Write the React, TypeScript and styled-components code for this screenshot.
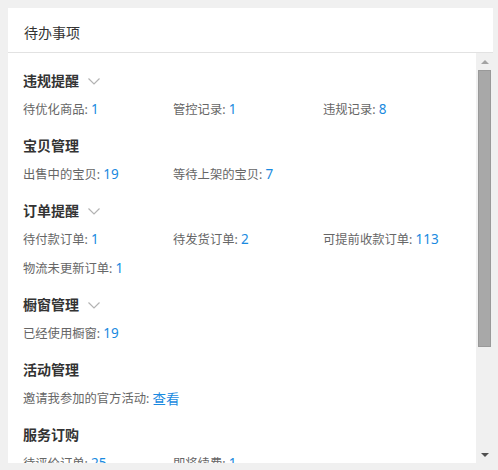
import React from 'react';
import styled, { createGlobalStyle } from 'styled-components';

type Item = { label: string; value: string };
type Section = { title: string; collapsible?: boolean; items: Item[] };

const sections: Section[] = [
  {
    title: '违规提醒',
    collapsible: true,
    items: [
      { label: '待优化商品', value: '1' },
      { label: '管控记录', value: '1' },
      { label: '违规记录', value: '8' },
    ],
  },
  {
    title: '宝贝管理',
    items: [
      { label: '出售中的宝贝', value: '19' },
      { label: '等待上架的宝贝', value: '7' },
    ],
  },
  {
    title: '订单提醒',
    collapsible: true,
    items: [
      { label: '待付款订单', value: '1' },
      { label: '待发货订单', value: '2' },
      { label: '可提前收款订单', value: '113' },
      { label: '物流未更新订单', value: '1' },
    ],
  },
  {
    title: '橱窗管理',
    collapsible: true,
    items: [{ label: '已经使用橱窗', value: '19' }],
  },
  {
    title: '活动管理',
    items: [{ label: '邀请我参加的官方活动', value: '查看' }],
  },
  {
    title: '服务订购',
    items: [
      { label: '待评价订单', value: '25' },
      { label: '即将续费', value: '1' },
    ],
  },
];

export default function App() {
  return (
    <>
      <GlobalStyle />
      <Page>
        <Card>
          <Header>待办事项</Header>
          <Body>
            <Content>
              {sections.map((s) => (
                <Block key={s.title}>
                  <BlockTitle>
                    {s.title}
                    {s.collapsible && (
                      <Chevron width="12" height="7" viewBox="0 0 12 7">
                        <polyline points="0.5,0.5 6,6 11.5,0.5" />
                      </Chevron>
                    )}
                  </BlockTitle>
                  <ItemGrid>
                    {s.items.map((it) => (
                      <ItemCell key={it.label} $wide={it.label.length > 8}>
                        {it.label}: <Num>{it.value}</Num>
                      </ItemCell>
                    ))}
                  </ItemGrid>
                </Block>
              ))}
            </Content>
            <ScrollBar>
              <ArrowButton>
                <Arrow $up />
              </ArrowButton>
              <Thumb />
              <Track />
              <ArrowButton>
                <Arrow />
              </ArrowButton>
            </ScrollBar>
          </Body>
        </Card>
      </Page>
    </>
  );
}

const GlobalStyle = createGlobalStyle`
  html, body {
    margin: 0;
    background: #f0f0f0;
  }
  body {
    font-family: "Noto Sans", "Noto Sans CJK SC", sans-serif;
  }
`;

const Page = styled.div`
  padding: 8px;
  width: 498px;
  height: 470px;
  box-sizing: border-box;
`;

const Card = styled.div`
  width: 485px;
  height: 455px;
  background: #fff;
  display: flex;
  flex-direction: column;
`;

const Header = styled.div`
  height: 45px;
  flex-shrink: 0;
  display: flex;
  align-items: center;
  padding-left: 16px;
  padding-top: 3px;
  box-sizing: border-box;
  border-bottom: 1px solid #e2e2e2;
  font-size: 14px;
  color: #333;
`;

const Body = styled.div`
  flex: 1;
  min-height: 0;
  display: flex;
`;

const Content = styled.div`
  flex: 1;
  overflow: hidden;
  padding: 18px 0 0 15px;
`;

const Block = styled.div`
  margin-bottom: 13px;
`;

const BlockTitle = styled.div`
  height: 20px;
  line-height: 20px;
  display: flex;
  align-items: center;
  font-size: 14px;
  font-weight: 700;
  color: #333;
`;

const Chevron = styled.svg`
  margin-left: 9px;
  fill: none;
  stroke: #b3b3b3;
  stroke-width: 1.2;
`;

const ItemGrid = styled.div`
  margin-top: 4px;
  display: grid;
  grid-template-columns: repeat(3, 150px);
  grid-auto-rows: 28px;
  row-gap: 1px;
`;

const ItemCell = styled.div<{ $wide?: boolean }>`
  display: flex;
  align-items: center;
  white-space: pre;
  font-size: 12.3px;
  color: #666;
  grid-column: ${(p) => (p.$wide ? 'span 2' : 'auto')};
`;

const Num = styled.span`
  color: #1a8ae0;
  font-size: 13.5px;
`;

const ScrollBar = styled.div`
  width: 17px;
  flex-shrink: 0;
  background: #f0f0f0;
  display: flex;
  flex-direction: column;
`;

const ArrowButton = styled.div`
  height: 17px;
  display: flex;
  align-items: center;
  justify-content: center;
`;

const Arrow = styled.div<{ $up?: boolean }>`
  width: 0;
  height: 0;
  border-left: 4px solid transparent;
  border-right: 4px solid transparent;
  ${(p) =>
    p.$up
      ? 'border-bottom: 4px solid #a3a3a3;'
      : 'border-top: 4px solid #505050;'}
`;

const Thumb = styled.div`
  height: 277px;
  margin: 0 2px;
  background: #a8a8a8;
  border: 1px solid #999;
  box-sizing: border-box;
`;

const Track = styled.div`
  flex: 1;
`;
